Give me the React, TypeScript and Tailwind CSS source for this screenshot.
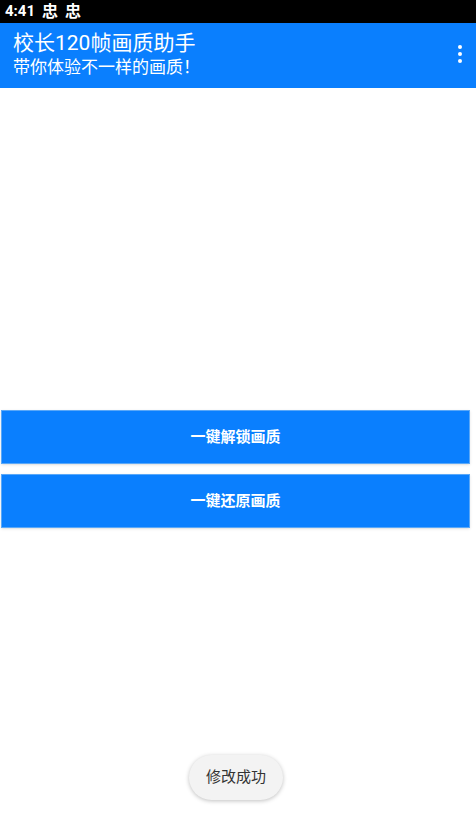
import React from "react";

const FONT = { fontFamily: '"Roboto", "Noto Sans CJK SC", sans-serif' };

export default function App() {
  return (
    <div className="relative h-[834px] w-full bg-white flex flex-col" style={FONT}>
      {/* status bar */}
      <div className="h-[23px] bg-black flex items-center px-[5px] gap-[7px] text-white text-[15px] font-bold leading-none">
        <span>4:41</span>
        <span className="text-[16px]">忠</span>
        <span className="text-[16px]">忠</span>
      </div>

      {/* app bar */}
      <div className="h-[65px] bg-[#0a7ffe] flex items-center justify-between pl-[13px] pr-[14px]">
        <div className="flex flex-col text-white">
          <span className="text-[21px] leading-[25px] mt-[-2px]">校长120帧画质助手</span>
          <span className="text-[17px] leading-[22px]">带你体验不一样的画质！</span>
        </div>
        <div className="flex flex-col gap-[3px] items-center mt-[-4px]">
          <span className="w-[4px] h-[4px] rounded-full bg-white" />
          <span className="w-[4px] h-[4px] rounded-full bg-white" />
          <span className="w-[4px] h-[4px] rounded-full bg-white" />
        </div>
      </div>

      {/* content */}
      <div className="flex-1 flex flex-col gap-[10px] pt-[322px] pl-[1px] pr-[6px]">
        <button className="h-[54px] w-full bg-[#0a7ffe] border border-[#5aa8f8] text-white text-[15px] font-bold shadow-sm">
          一键解锁画质
        </button>
        <button className="h-[54px] w-full bg-[#0a7ffe] border border-[#5aa8f8] text-white text-[15px] font-bold shadow-sm">
          一键还原画质
        </button>
      </div>

      {/* toast */}
      <div className="absolute left-[189px] top-[755px] w-[94px] h-[45px] rounded-full bg-[#f3f3f3] shadow-[0_1px_4px_rgba(0,0,0,0.25)] flex items-center justify-center text-[15px] text-[#333]">
        修改成功
      </div>
    </div>
  );
}
